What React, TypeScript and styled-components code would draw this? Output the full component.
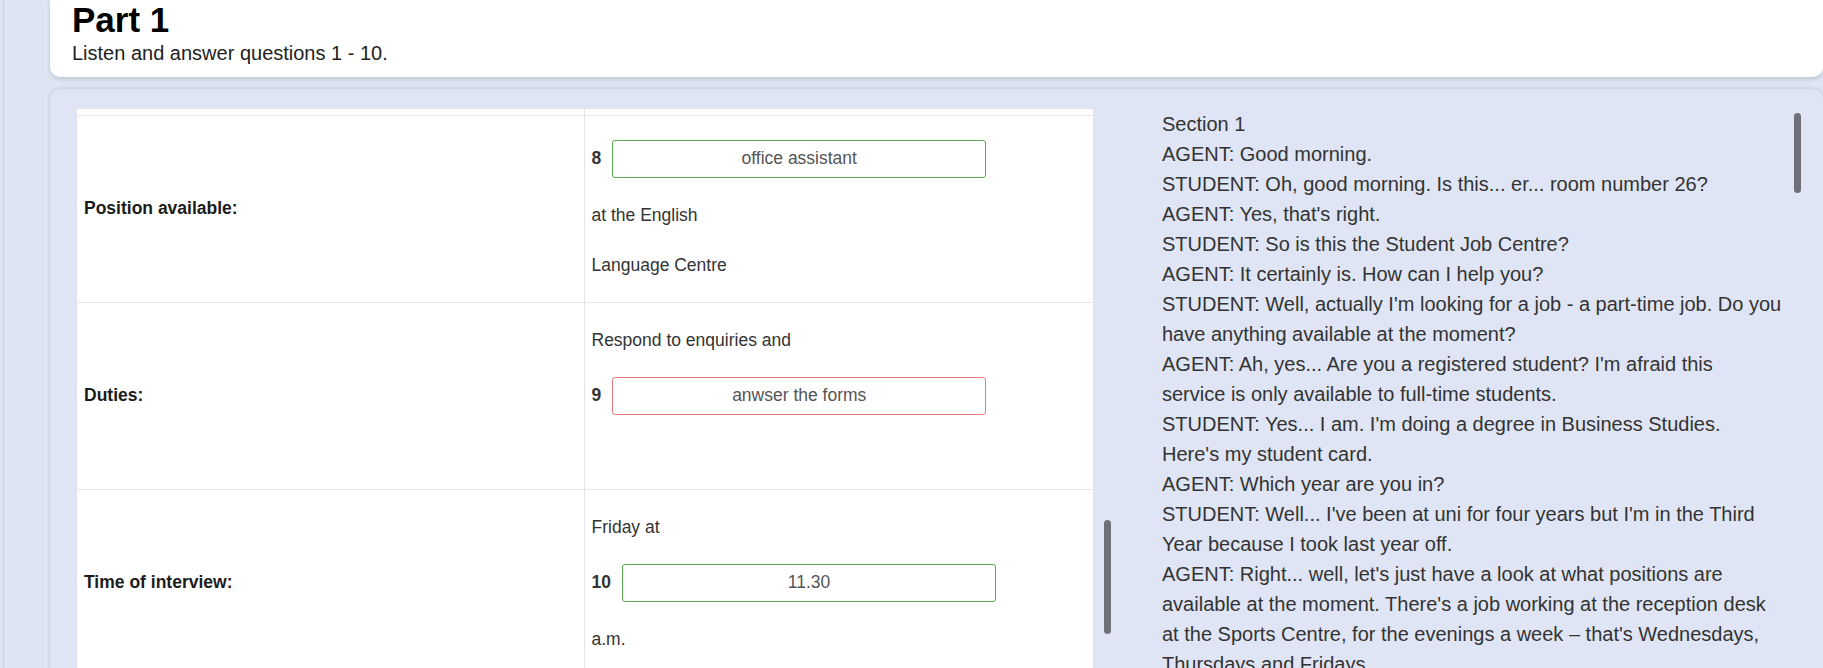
import { Fragment } from "react";
import styled, { createGlobalStyle } from "styled-components";

const GlobalStyle = createGlobalStyle`
  html, body {
    margin: 0;
    padding: 0;
    height: 100%;
    overflow: hidden;
    background: #dee4f3;
  }
  body {
    font-family: "Liberation Sans", Arial, sans-serif;
  }
`;

type Part =
  | { kind: "text"; value: string }
  | { kind: "answer"; num: number; value: string; ok: boolean };

const rows: { label: string; parts: Part[] }[] = [
  {
    label: "Position available:",
    parts: [
      { kind: "answer", num: 8, value: "office assistant", ok: true },
      { kind: "text", value: "at the English" },
      { kind: "text", value: "Language Centre" },
    ],
  },
  {
    label: "Duties:",
    parts: [
      { kind: "text", value: "Respond to enquiries and" },
      { kind: "answer", num: 9, value: "anwser the forms", ok: false },
      { kind: "text", value: "" },
    ],
  },
  {
    label: "Time of interview:",
    parts: [
      { kind: "text", value: "Friday at" },
      { kind: "answer", num: 10, value: "11.30", ok: true },
      { kind: "text", value: "a.m." },
    ],
  },
];

// each turn of the transcript, broken where the reference breaks it
const transcript: string[][] = [
  ["Section 1"],
  ["AGENT: Good morning."],
  ["STUDENT: Oh, good morning. Is this... er... room number 26?"],
  ["AGENT: Yes, that's right."],
  ["STUDENT: So is this the Student Job Centre?"],
  ["AGENT: It certainly is. How can I help you?"],
  [
    "STUDENT: Well, actually I'm looking for a job - a part-time job. Do you",
    "have anything available at the moment?",
  ],
  [
    "AGENT: Ah, yes... Are you a registered student? I'm afraid this",
    "service is only available to full-time students.",
  ],
  [
    "STUDENT: Yes... I am. I'm doing a degree in Business Studies.",
    "Here's my student card.",
  ],
  ["AGENT: Which year are you in?"],
  [
    "STUDENT: Well... I've been at uni for four years but I'm in the Third",
    "Year because I took last year off.",
  ],
  [
    "AGENT: Right... well, let's just have a look at what positions are",
    "available at the moment. There's a job working at the reception desk",
    "at the Sports Centre, for the evenings a week – that's Wednesdays,",
    "Thursdays and Fridays.",
  ],
];

const App = () => {
  return (
    <>
      <GlobalStyle />
      <Page>
        <HeaderCard>
          <Title>Part 1</Title>
          <Subtitle>Listen and answer questions 1 - 10.</Subtitle>
        </HeaderCard>
        <Panel>
          <LeftPane>
            <TableWrap>
              <FormTable>
                <colgroup>
                  <col style={{ width: "507px" }} />
                  <col />
                </colgroup>
                <tbody>
                  <TailRow>
                    <td />
                    <td />
                  </TailRow>
                  {rows.map((row) => (
                    <tr key={row.label}>
                      <LabelCell>{row.label}</LabelCell>
                      <ContentCell>
                        {row.parts.map((part, i) =>
                          part.kind === "text" ? (
                            <CellText key={i}>{part.value}</CellText>
                          ) : (
                            <AnswerLine key={i}>
                              <QNum>{part.num}</QNum>
                              <AnswerInput readOnly value={part.value} $ok={part.ok} />
                            </AnswerLine>
                          )
                        )}
                      </ContentCell>
                    </tr>
                  ))}
                </tbody>
              </FormTable>
            </TableWrap>
            <ScrollThumb $left={1027} $top={411} $height={114} />
          </LeftPane>
          <RightPane>
            <Transcript>
              {transcript.map((turn, i) => (
                <TranscriptLine key={i}>
                  {turn.map((piece, j) => (
                    <Fragment key={j}>
                      {j > 0 && <br />}
                      {piece}
                    </Fragment>
                  ))}
                </TranscriptLine>
              ))}
            </Transcript>
            <ScrollThumb $left={632} $top={4} $height={80} />
          </RightPane>
        </Panel>
      </Page>
    </>
  );
};

export default App;

const Page = styled.div`
  height: 100vh;
  margin-left: 3px;
  border-left: 1px solid #cbd0da;
  padding-left: 46px;
  display: flex;
  flex-direction: column;
  overflow: hidden;
`;

const HeaderCard = styled.div`
  flex-shrink: 0;
  background: #fff;
  border-radius: 0 0 10px 10px;
  padding: 0 22px 12px;
  box-shadow: 0 2px 4px rgba(0, 0, 0, 0.14);
`;

const Title = styled.h1`
  margin: 0;
  font-size: 35px;
  line-height: 40px;
  font-weight: 700;
  color: #000;
`;

const Subtitle = styled.p`
  margin: 1px 0 0;
  font-size: 20px;
  line-height: 24px;
  color: #222;
`;

const Panel = styled.div`
  flex-shrink: 0;
  margin-top: 12px;
  height: 640px;
  border-radius: 10px;
  background: #dfe5f4;
  box-shadow: 0 0 4px rgba(0, 0, 0, 0.14);
  padding: 20px 20px 0 27px;
  display: grid;
  grid-template-columns: 1038px 1fr;
  column-gap: 47px;
  overflow: hidden;
`;

const LeftPane = styled.div`
  position: relative;
  overflow: hidden;
`;

const TableWrap = styled.div`
  width: 1016px;
  background: #fff;
`;

const FormTable = styled.table`
  width: 100%;
  border-collapse: collapse;
  table-layout: fixed;

  td {
    border-bottom: 1px solid #e6e6e6;
    padding: 0 7px;
  }
  td + td {
    border-left: 1px solid #e6e6e6;
  }
`;

const TailRow = styled.tr`
  height: 6px;
`;

const LabelCell = styled.td`
  vertical-align: middle;
  font-size: 17.5px;
  font-weight: 700;
  color: #1c1c1c;
`;

const ContentCell = styled.td`
  vertical-align: top;
`;

const CellText = styled.p`
  margin: 24px 0;
  min-height: 26px;
  font-size: 17.5px;
  line-height: 26px;
  color: #333;
`;

const AnswerLine = styled.div`
  margin: 24px 0;
  display: flex;
  align-items: center;
  gap: 11px;
  height: 38px;
`;

const QNum = styled.span`
  font-size: 17.5px;
  font-weight: 700;
  color: #333;
`;

const AnswerInput = styled.input<{ $ok: boolean }>`
  box-sizing: border-box;
  width: 374px;
  height: 38px;
  padding: 0 8px;
  border: 1px solid ${(p) => (p.$ok ? "#5aa94f" : "#e77b7b")};
  border-radius: 3px;
  background: #fff;
  font-family: "Liberation Sans", Arial, sans-serif;
  font-size: 17.5px;
  color: #555;
  text-align: center;
  outline: none;
`;

const RightPane = styled.div`
  position: relative;
  overflow: hidden;
`;

const Transcript = styled.div`
  width: 630px;
  font-size: 20px;
  line-height: 30px;
  color: #333;
  white-space: nowrap;
`;

const TranscriptLine = styled.div``;

const ScrollThumb = styled.div<{ $left: number; $top: number; $height: number }>`
  position: absolute;
  left: ${(p) => p.$left}px;
  top: ${(p) => p.$top}px;
  width: 7px;
  height: ${(p) => p.$height}px;
  border-radius: 4px;
  background: #6e7178;
`;
